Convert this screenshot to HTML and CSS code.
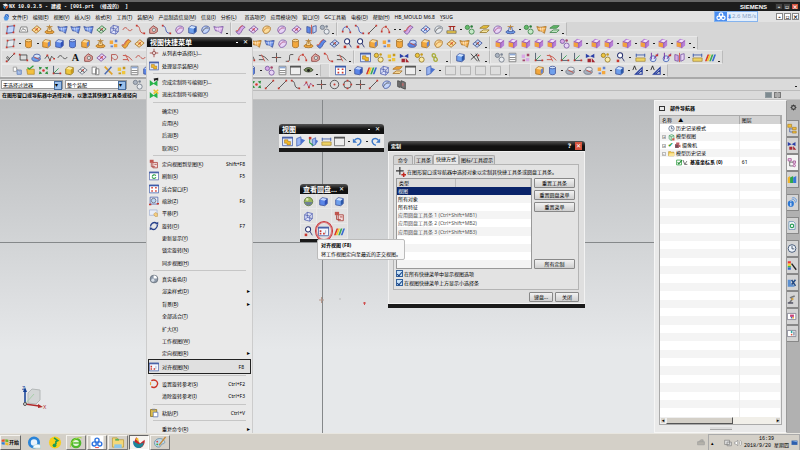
FILE: index.html
```
<!DOCTYPE html>
<html lang="zh-CN">

<head>
    <meta charset="utf-8">
    <title>NX 10.0.3.5 - 建模</title>
    <link rel="stylesheet" href="styles.css">
</head>

<body>
    <svg class="sprite" aria-hidden="true">
        <symbol id="cube" viewBox="0 0 13 13"><path class="a ln" d="M2 4.5l3-2.500 6 1v6l-3 2.500-6-1z"/><path class="b" d="M2.500 4.500l3-2 5 1-2.500 2z"/><path class="c" d="M8 5.500l2.700-2v5.300L8 11z"/></symbol>
        <symbol id="feat" viewBox="0 0 13 13"><path fill="#b77fd8" d="M2 4l4-3 6 2v6l-4 3-6-2z"/><path fill="#f3e4fa" d="M4 4l3-2 4 1-3 2z"/><path fill="#f2a23c" d="M2 5l5 1v5l-5-1z"/><path fill="none" stroke="#8a4f8e" stroke-width=".7" d="M2 4l6 2v6M8 6l4-3"/></symbol>
        <symbol id="sheet" viewBox="0 0 13 13"><path class="b ln" d="M3 3l8-1-1 8-8 1z"/><path fill="#d23a2e" d="M2 2h2v2H2zM10 1h2v2h-2zM1 10h2v2H1zM9 9h2v2H9z"/></symbol>
        <symbol id="mesh" viewBox="0 0 13 13"><path class="a ln" d="M1 3c4 2 7 0 11 0l-2 8c-3-2-4-3-7-3z"/><path fill="none" stroke="#fff" stroke-width=".6" d="M2 5.500c4 1 6 0 9 0M5 4l1 5M8 4v6"/></symbol>
        <symbol id="diamond" viewBox="0 0 13 13"><path class="b ln" d="M1 7l6-5 5 4-6 5z"/><path class="s" d="M4 5l5 4M4 9l5-5"/><circle fill="#d8443a" cx="7" cy="6" r="1"/></symbol>
        <symbol id="swoop" viewBox="0 0 13 13"><path class="a ln" d="M1 9c4 2 4-6 8-7l3 2c-4 1-4 8-8 8z"/><path fill="none" stroke="#d8443a" d="M1 8c4 1 3-5 8-6"/></symbol>
        <symbol id="cyl" viewBox="0 0 13 13"><path class="a ln" d="M3 3v7c1 2 6 2 7 0V3z"/><ellipse class="b ln" cx="6.500" cy="3" rx="3.500" ry="1.500"/></symbol>
        <symbol id="pad" viewBox="0 0 13 13"><ellipse class="a ln" cx="6.500" cy="9.500" rx="5.500" ry="2"/><path class="b ln" d="M4 9l1-5h3l1 5z"/><path fill="none" stroke="#b9853a" d="M3 3h7M6.500 1v6"/></symbol>
        <symbol id="blob" viewBox="0 0 13 13"><ellipse class="a ln" cx="6" cy="8" rx="5" ry="3"/><ellipse class="b ln" cx="7" cy="5" rx="4" ry="2.500"/><path fill="none" stroke="#cf4a3b" d="M4 6l6 3"/></symbol>
        <symbol id="leaf" viewBox="0 0 13 13"><path class="b ln" d="M2 8c0-6 6-7 9-4 1 4-3 8-7 7z"/><path class="s" d="M3 9c2-4 4-5 7-4"/></symbol>
        <symbol id="pair" viewBox="0 0 13 13"><path class="a ln" d="M1 3l4 1v7l-4-1z"/><path class="b ln" d="M8 3l4-1v7l-4 2z"/><path stroke="#cf4a3b" d="M6.500 1v11"/></symbol>
        <symbol id="curve" viewBox="0 0 13 13"><path class="s" d="M2 2c6 1 1 9 9 9"/><path fill="#c7372e" d="M1 1h2v2H1zM10 10h2v2h-2z"/></symbol>
        <symbol id="wave" viewBox="0 0 13 13"><path class="s" d="M1 7c2-4 4-3 5.500-1s4 3 5.500 0"/></symbol>
        <symbol id="line" viewBox="0 0 13 13"><path class="s" d="M2 11l9-9"/><path fill="#c7372e" d="M1 10h2v2H1zM10 1h2v2h-2z"/></symbol>
        <symbol id="arc" viewBox="0 0 13 13"><path class="s" d="M2 9c0-8 8-7 9 1"/><path fill="#c7372e" d="M1 8h2v2H1zM6 2h2v2H6zM10 9h2v2h-2z"/></symbol>
        <symbol id="zig" viewBox="0 0 13 13"><path class="s" d="M1 8l3-4 3 6 2-5 3 3"/><path fill="#c7372e" d="M3 3h2v2H3zM6 9h2v2H6zM11 7h2v2h-2z"/></symbol>
        <symbol id="trim" viewBox="0 0 13 13"><path class="s" d="M1 4c5 0 8 2 11 6M1 9h6"/><path fill="none" stroke="#cf4a3b" d="M4 3l4 8"/></symbol>
        <symbol id="cross" viewBox="0 0 13 13"><path class="s" d="M6.500 1v11M1 6.500h11"/><circle fill="#cf4a3b" cx="6.500" cy="6.500" r="1"/></symbol>
        <symbol id="stepc" viewBox="0 0 13 13"><path class="s" d="M2 11h3c3 0 0-8 3-8h3"/><path stroke="#cf4a3b" d="M4 11h2"/></symbol>
        <symbol id="circ" viewBox="0 0 13 13"><circle class="s" cx="6.500" cy="6.500" r="5"/><circle fill="#c7372e" cx="6.500" cy="6.500" r="1.200"/></symbol>
        <symbol id="circ4" viewBox="0 0 13 13"><circle class="s" cx="6.500" cy="6.500" r="4.500"/><path fill="#c7372e" d="M5.500 1h2v2h-2zM5.500 10h2v2h-2zM1 5.500h2v2H1zM10 5.500h2v2h-2z"/></symbol>
        <symbol id="pencil" viewBox="0 0 13 13"><path class="s" d="M1 11c4 0 5-3 3-5S1 8 4 9l7-7"/><path fill="#c7372e" d="M1 10h2v2H1zM10 1h2v2h-2z"/></symbol>
        <symbol id="rect" viewBox="0 0 13 13"><path class="s" d="M2.500 3.500h8v6h-8z"/><path fill="#c7372e" d="M1 2h2v2H1zM10 9h2v2h-2z"/></symbol>
        <symbol id="letter" viewBox="0 0 13 13"><text class="glyph" x="2" y="11">A</text></symbol>
        <symbol id="region" viewBox="0 0 13 13"><path fill="#e9a9a4" stroke="#883c38" d="M2 11V6l4-4 5 3v4l-3 2z"/><circle fill="#ddd" stroke="#777" cx="7" cy="7" r="2"/></symbol>
        <symbol id="loop" viewBox="0 0 13 13"><path fill="none" stroke="#b34c45" d="M3 11V3h5c4 2 2 7-2 6l-3-3"/></symbol>
        <symbol id="squares" viewBox="0 0 13 13"><path fill="#fff" stroke="#999" d="M1.500 2.500h4v5h-4z"/><path fill="#a8c0ea" stroke="#6584bd" d="M6 6h5v5H6z"/><path stroke="#999" d="M5 4l5 4"/></symbol>
        <symbol id="folder" viewBox="0 0 13 13"><path fill="#f2c03f" stroke="#a87a18" stroke-width=".7" d="M2 5l3-1 1 1h5v6H3z"/><path fill="none" stroke="#33a03b" stroke-width="1.500" d="M3 3l2 2 5-4"/></symbol>
        <symbol id="axes" viewBox="0 0 13 13"><path fill="none" stroke="#456" d="M3 1v9h9"/><path stroke="#2b9a4d" d="M3 10l6-6"/><path fill="#c7372e" d="M2 9h2v2H2zM10 9h2v2h-2z"/></symbol>
        <symbol id="pages" viewBox="0 0 13 13"><path fill="#fff" stroke="#777" d="M2.500 2.500h5v8h-5zM6.500 4.500h4v7h-4z"/></symbol>
        <symbol id="image" viewBox="0 0 13 13"><path fill="#f4f4f4" stroke="#777" d="M1.500 9.500l2-6h7l1 6z"/><path fill="none" stroke="#888" d="M4 8l2-3 1 2 1-1 1 2"/></symbol>
        <symbol id="cross2" viewBox="0 0 13 13"><path stroke="#e0a12b" stroke-width="2" d="M2 2l9 9"/><path stroke="#4a69b0" stroke-width="1.600" d="M10 2l-8 9"/></symbol>
        <symbol id="hash" viewBox="0 0 13 13"><path fill="none" stroke="#333" d="M1 2l8 9M1 9l8-7M7 2l4 9"/><path fill="#c7372e" d="M9 3h2v2H9z"/></symbol>
        <symbol id="chips" viewBox="0 0 13 13"><path class="a" d="M2 3h4v4H2zM7 7h4v4H7z"/><path class="c" d="M8 2h3v3H8zM3 9h3v2H3z"/></symbol>
        <symbol id="layout" viewBox="0 0 13 13"><path fill="#fff" stroke="#777" d="M2.500 1.500h8v10h-8z"/><path fill="#8ea9d6" d="M3 2h7v2H3z"/><path stroke="#777" d="M3 6.500h7M3 9h7"/></symbol>
        <symbol id="frame" viewBox="0 0 13 13"><path fill="#eee" stroke="#666" d="M.5 1.500h12v10H.5z"/><path fill="#555" d="M0 1h13v2H0z"/></symbol>
        <symbol id="empty" viewBox="0 0 13 13"><path fill="none" stroke="#aaa" d="M.5 1.500h12v10H.5z"/></symbol>
        <symbol id="fit" viewBox="0 0 13 13"><path fill="#fff" stroke="#3d5ba9" d="M.5 1.500h12v10H.5z"/><path fill="#3d5ba9" d="M0 1h13v2H0z"/><path fill="#d23a2e" d="M3 4h2v2H3zM8 4h2v2H8zM3 8h2v2H3zM8 8h2v2H8z"/></symbol>
        <symbol id="win" viewBox="0 0 13 13"><path fill="#dfe8fa" stroke="#4a62a8" d="M.5 1.500h12v10H.5z"/><path fill="#4a62a8" d="M0 1h13v2H0z"/><path fill="#f0b72d" stroke="#9a6a12" stroke-width=".6" d="M3 4.500h4v2h3v4H6v-2H3z"/></symbol>
        <symbol id="align" viewBox="0 0 13 13"><path fill="#f6f8ff" stroke="#4a62a8" d="M.5 1.500h12v10H.5z"/><path fill="#4a62a8" d="M0 1h13v2H0z"/><path fill="#c7372e" d="M2 5h2v2H2zM2 8h2v2H2zM6 8h2v2H6z"/><path stroke="#9ab" d="M9 5v4"/></symbol>
        <symbol id="refresh" viewBox="0 0 13 13"><path fill="#fff" stroke="#4a62a8" d="M.5 1.500h12v10H.5z"/><path fill="#4a62a8" d="M0 1h13v2H0z"/><path fill="none" stroke="#2ca045" stroke-width="1.500" d="M9 6c-2-2-4-1-5 1M4 8c1 2 4 2 5 0"/></symbol>
        <symbol id="zoom" viewBox="0 0 13 13"><path fill="#e8ecf6" stroke="#4a62a8" d="M1.500 1.500h10v9h-10z"/><circle fill="#bcd8f4" stroke="#667" cx="6" cy="6" r="3"/><path fill="#c7372e" d="M0 10h3v2H0zM10 9h3v2h-3z"/></symbol>
        <symbol id="pan" viewBox="0 0 13 13"><path fill="#e9edf8" stroke="#a5b2d1" d="M.5 2.500h10v7H.5z"/><path fill="#f6cf83" stroke="#b38a3f" stroke-width=".6" d="M6 8l2-2 3 1v4H8z"/></symbol>
        <symbol id="rotate" viewBox="0 0 13 13"><path fill="none" stroke="#27408b" stroke-width="1.700" d="M10 3C6 0 2 4 2 7M3 10c4 3 8-1 8-5"/><path fill="#27408b" d="M8 4l4-3v4zM5 9l-4 3V8z"/></symbol>
        <symbol id="shade" viewBox="0 0 13 13"><circle fill="#8f9bab" stroke="#5e6875" cx="6.500" cy="6.500" r="5"/><path fill="#fff" d="M6 6V2c3 0 5 2 4 4z"/><circle fill="#d6dde6" cx="5" cy="8" r="2"/></symbol>
        <symbol id="orbit" viewBox="0 0 13 13"><path fill="none" stroke="#cc3528" stroke-width="1.800" d="M3 2c5-2 9 1 8 5s-5 5-8 3"/><path fill="none" stroke="#eda33d" stroke-width="1.500" d="M2 4v4"/></symbol>
        <symbol id="paste" viewBox="0 0 13 13"><path fill="#e0c04e" stroke="#8a6d17" d="M2 2h8v9H2z"/><path fill="#888" d="M4 1h4v2H4z"/><path fill="#fff" stroke="#5871b4" d="M5.500 5.500h6v6h-6z"/></symbol>
        <symbol id="pick" viewBox="0 0 13 13"><path stroke="#b05a55" stroke-width="1.300" d="M6.500 1v11M1 6.500h11"/><circle fill="#e9cfcf" stroke="#8c4a47" cx="6.500" cy="6.500" r="2.200"/></symbol>
        <symbol id="flagk" viewBox="0 0 13 13"><path fill="#27b34a" d="M1 4l5 4 5-4v8L6 9l-5 3z"/><path fill="#222" d="M6 2l6-1v4l-3-1-2 2z"/></symbol>
        <symbol id="flagx" viewBox="0 0 13 13"><path fill="#27b34a" d="M1 4l5 4 5-4v8L6 9l-5 3z"/><path stroke="#eac52e" stroke-width="2" d="M6 1l6 5M12 1L6 6"/></symbol>
        <symbol id="orient" viewBox="0 0 13 13"><path fill="#f4dcdc" stroke="#a8403a" d="M5 4.500h6v7H5z"/><path fill="#c0564f" d="M1 1h5v4H1z"/><path fill="none" stroke="#a8403a" d="M3 5v5h5M7 7h3"/></symbol>
        <symbol id="gears" viewBox="0 0 13 13"><circle class="a ln" cx="4" cy="4" r="2.500"/><circle class="b ln" cx="9" cy="9" r="3"/><circle class="c" cx="9" cy="3" r="1.500"/></symbol>
        <symbol id="link" viewBox="0 0 13 13"><path fill="none" stroke="#a9ad3c" stroke-width="1.600" d="M5 2c3 0 4 4 1 4s-3-4 0-4zM7 6c3 0 4 5 1 5S5 6 8 6z"/></symbol>
        <symbol id="mate" viewBox="0 0 13 13"><path fill="#2b3fa8" d="M1 2l5 3 5-3v5L6 5 1 7z"/><path fill="#a52732" d="M3 8h4v4H3zM8 7l4 5H8z"/></symbol>
        <symbol id="stack" viewBox="0 0 13 13"><path class="a ln" d="M1 5l4-3h7l-3 3z"/><path class="b ln" d="M1 10l4-3h7l-3 3z"/></symbol>
        <symbol id="scope" viewBox="0 0 13 13"><path fill="none" stroke="#a32820" stroke-width="1.300" d="M3 3h8M5 3v4M9 3v5"/><path fill="#e7c54a" stroke="#444" stroke-width=".6" d="M1 8h11v3H1z"/></symbol>
        <symbol id="ruler" viewBox="0 0 13 13"><path fill="#edd264" stroke="#967622" stroke-width=".7" d="M1 7h11v4H1z"/><path stroke="#3857a8" d="M1 3.500h11M1.500 2v4M11.500 2v4"/></symbol>
        <symbol id="caliper" viewBox="0 0 13 13"><circle fill="#d9e6fb" stroke="#4866b3" cx="6" cy="8" r="3.500"/><path fill="none" stroke="#7c3ea8" stroke-width="1.200" d="M4 1v8M7 8l5-6"/><path fill="#c7372e" d="M9 3h3v2H9z"/></symbol>
        <symbol id="stripes" viewBox="0 0 13 13"><path fill="#d9372c" d="M0 11l3-8h2l-3 8z"/><path fill="#f1c92f" d="M2 11l3-8h2l-3 8z"/><path fill="#38a855" d="M5 11l3-8h2l-3 8z"/><path fill="#3768d0" d="M8 11l3-8h2l-3 8z"/></symbol>
        <symbol id="undo" viewBox="0 0 13 13"><path fill="none" stroke="#3d79c9" stroke-width="1.700" d="M3 5c4-4 9-1 7 3-1 2-2 3-4 3"/><path fill="#3d79c9" d="M1 3v5h5z"/></symbol>
        <symbol id="redo" viewBox="0 0 13 13"><path fill="none" stroke="#3d79c9" stroke-width="1.700" d="M10 5C6 1 1 4 3 8c1 2 2 3 4 3"/><path fill="#3d79c9" d="M12 3v5H7z"/></symbol>
        <symbol id="wire" viewBox="0 0 13 13"><path fill="#dfe3fa" stroke="#3f4fa8" stroke-width=".8" d="M2 4.500l3-3 6 1.500v6l-3 3-6-1.500zM2 4.500L8 6v6M8 6l3-3M5 1.500v6l6 1.500M5 7.500l-3 3"/></symbol>
        <symbol id="ball" viewBox="0 0 13 13"><circle fill="#98b55d" stroke="#5f7a3a" cx="6.500" cy="6.500" r="5"/><path fill="#6f7f95" d="M2 7h9c0 5-8 6-9 0z"/><circle fill="#dfeab5" cx="5" cy="4" r="1.500"/></symbol>
        <symbol id="seek" viewBox="0 0 13 13"><circle fill="#fff" stroke="#26306e" stroke-width="1.200" cx="6" cy="4" r="3"/><path fill="#c7372e" d="M2 9h3v3H2z"/><path stroke="#26306e" d="M8 6l3 5"/></symbol>
        <symbol id="sect" viewBox="0 0 13 13"><path fill="#9ab6f2" stroke="#3c59ab" stroke-width=".8" d="M2 3l5-2v9l-5 2z"/><path fill="#4b72d0" d="M7 3l5 2-5 5z"/></symbol>
        <symbol id="sectr" viewBox="0 0 13 13"><path fill="#9ab6f2" stroke="#3c59ab" stroke-width=".8" d="M5 4l4-2v8l-4 2z"/><path fill="none" stroke="#2b9a4d" stroke-width="1.300" d="M2 2v6l4 3"/><path fill="#c7372e" d="M1 1h3v3H1z"/><path fill="#4b72d0" d="M9 4l3 2-3 4z"/></symbol>
        <symbol id="eye" viewBox="0 0 13 13"><path fill="#74875a" stroke="#3f4a30" d="M1 6c3-4 8-4 11 0-3 3-8 3-11 0z"/><circle fill="#222" cx="6.500" cy="6.500" r="1.700"/></symbol>
        <symbol id="green4" viewBox="0 0 13 13"><path fill="#2c8f3c" d="M1 2l4 1-3 3zM12 2L8 3l3 3zM1 11l4-1-3-3zM12 11l-4-1 3-3z"/><circle fill="#d33" cx="6.500" cy="6.500" r="1.500"/></symbol>
        <symbol id="wall" viewBox="0 0 13 13"><path fill="#777" stroke="#444" d="M2 2l3 1v7l-3-1zM6 2l5 2v8l-5-2z"/><path fill="#b96b6b" d="M7 5h2v3H7z"/></symbol>
        <symbol id="note" viewBox="0 0 13 13"><path fill="none" stroke="#223a9c" stroke-width="1.300" d="M4 11h8V3zM6 11l6-5"/><path fill="none" stroke="#222" d="M1 6l2-5 2 5"/></symbol>
        <symbol id="clock" viewBox="0 0 13 13"><circle fill="#eef4fb" stroke="#50627e" stroke-width="1.300" cx="6.500" cy="6.500" r="5"/><path fill="none" stroke="#26344c" d="M6.500 3v4h3"/></symbol>
        <symbol id="tree" viewBox="0 0 13 13"><path fill="#f2d9f0" stroke="#a0468f" d="M1.500 1.500h4v3h-4zM8 4.500h3v3H8z"/><path fill="none" stroke="#555" d="M3.500 5v6H8M3.500 6H8"/><circle fill="#f2d9f0" stroke="#a0468f" cx="9.500" cy="10.500" r="1.500"/></symbol>
        <symbol id="asm" viewBox="0 0 13 13"><path fill="#f1bd36" stroke="#9c7014" stroke-width=".7" d="M1 1h5v4H1zM7 5h5v3H7zM7 10h5v2.500H7z"/><path fill="none" stroke="#4b61a0" d="M3.500 6v5H7M4 7h3"/></symbol>
        <symbol id="books" viewBox="0 0 13 13"><path fill="#efb52e" d="M1 4l3-2v9H1z"/><path fill="#2fa64c" d="M4 4l4-2v9H4z"/><path fill="#3577d8" d="M8 4l4-2v9H8z"/></symbol>
        <symbol id="info" viewBox="0 0 13 13"><circle fill="#2c77d4" cx="5" cy="8" r="4"/><path fill="none" stroke="#4a8de0" d="M6 2c3 0 5 2 5 5M7 0c4 0 6 3 6 6"/><path stroke="#fff" stroke-width="1.300" d="M5 5v1M5 7v4"/></symbol>
        <symbol id="web" viewBox="0 0 13 13"><path fill="#fff" stroke="#5f8ab0" d="M2.500 1.500h6l2 2v8h-8z"/><circle fill="none" stroke="#2a9c58" stroke-width="1.500" cx="6.500" cy="7" r="2.200"/></symbol>
        <symbol id="rainbow" viewBox="0 0 13 13"><path fill="#e33" d="M1 1h4v3H1z"/><path fill="#fc3" d="M1 4h4v3H1z"/><path fill="#3b5" d="M1 7h4v2H1z"/><path fill="#36c" d="M1 9h4v3H1z"/><path stroke="#222" stroke-width="1.800" d="M6 4l6 8"/></symbol>
        <symbol id="mill" viewBox="0 0 13 13"><path fill="#5b8fd0" d="M1 3h4v6h3l2 3H1z"/><path stroke="#234a85" stroke-width="2" d="M6 3l5 8M11 3l-5 6"/></symbol>
        <symbol id="robot" viewBox="0 0 13 13"><path fill="none" stroke="#777" stroke-width="2" d="M3 11l4-5-2-2 5-2"/><path fill="#556" d="M1 10h7v2H1z"/><circle fill="#d9a53c" cx="7" cy="6" r="1.500"/></symbol>
        <symbol id="scene" viewBox="0 0 13 13"><path fill="#fff" stroke="#778" d="M.5 2.500h11v8H.5z"/><path fill="#c9447a" d="M4 4h5v3H4z"/><path fill="#4469b8" d="M5 7h2v2H5z"/><path fill="#f0a830" d="M7 7h2v2H7z"/></symbol>
        <symbol id="board" viewBox="0 0 13 13"><path fill="#fff" stroke="#778" d="M.5 2.500h11v8H.5z"/><path fill="#2ba7a0" d="M5 3h2v3H5z"/><path fill="#e3553d" d="M5 7h2v2H5z"/><path fill="#89a" d="M8 4h2v5H8z"/></symbol>
        <symbol id="views" viewBox="0 0 13 13"><path fill="#d9f0dd" stroke="#2a8a4a" d="M2 3l5-2 4 2v6l-5 3-4-3z"/><path fill="none" stroke="#2a8a4a" d="M2 3l4 2 5-2M6 5v7"/><path fill="#d9534a" d="M8 8h4v4H8z"/></symbol>
        <symbol id="camera" viewBox="0 0 13 13"><path fill="#7e4b56" d="M2 4h7v7H2z"/><path fill="#c25c63" d="M4 1h6v4H4zM9 6l3-1v5l-3-1z"/></symbol>
        <symbol id="dir" viewBox="0 0 13 13"><path fill="#f4c747" stroke="#a27e1d" stroke-width=".8" d="M1 3h4l1 1h5v7H1z"/><path fill="#fbe596" d="M3 6h10l-2 5H1z"/></symbol>
        <symbol id="csys" viewBox="0 0 22 13"><path fill="#fff" stroke="#33a044" stroke-width="1.500" d="M1 2h9v9H1z"/><path fill="none" stroke="#238934" stroke-width="2" d="M3 6l2 3 6-7"/><path fill="none" stroke="#555" stroke-width="1.500" d="M13 2l3 8h5M16 10l4-6"/></symbol>
        <symbol id="cog" viewBox="0 0 13 13"><circle fill="none" stroke="#333" stroke-width="2" cx="6.500" cy="6.500" r="3.500"/><path stroke="#333" stroke-width="1.500" d="M6.500 1v2M6.500 10v2M1 6.500h2M10 6.500h2M3 3l1 1M10 10L9 9M10 3L9 4M3 10l1-1"/></symbol>
    </svg>

    <div class="app">
        <header class="title-bar">
            <svg class="app-icon" viewBox="0 0 13 13"><path fill="#e8e8e8" d="M1 3l6-2 5 3-6 3z"/><path fill="#2a8fd6" d="M2 5l4 2v5L3 9z"/><path fill="#e05a2b" d="M7 7l5-3-1 5-4 3z"/></svg>
            <span class="title">NX 10.0.3.5 - 建模 - [001.prt （修改的） ]</span>
            <span class="brand">SIEMENS</span>
            <button class="win-btn" aria-label="最小化">-</button>
            <button class="win-btn" aria-label="还原">▫</button>
            <button class="win-btn close" aria-label="关闭">×</button>
        </header>

        <nav class="menu-bar">
            <svg class="menu-logo" viewBox="0 0 13 13"><circle fill="#2c67c4" cx="7" cy="5" r="4"/><path fill="#4d94e4" d="M1 7l5-2 5 4-3 4H3z"/><path stroke="#fff" d="M5 3l4 3"/></svg>
            <a href="#">文件(<u>F</u>)</a>
            <a href="#">编辑(<u>E</u>)</a>
            <a href="#">视图(<u>V</u>)</a>
            <a href="#">插入(<u>S</u>)</a>
            <a href="#">格式(<u>R</u>)</a>
            <a href="#">工具(<u>T</u>)</a>
            <a href="#">装配(<u>A</u>)</a>
            <a href="#">产品制造信息(<u>M</u>)</a>
            <a href="#">信息(<u>I</u>)</a>
            <a href="#">分析(<u>L</u>)</a>
            <a class="after" href="#">首选项(<u>P</u>)</a>
            <a href="#">应用模块(<u>N</u>)</a>
            <a href="#">窗口(<u>O</u>)</a>
            <a href="#">GC工具箱</a>
            <a href="#">电极(<u>D</u>)</a>
            <a href="#">帮助(<u>H</u>)</a>
            <a href="#">HB_MOULD M6.8</a>
            <a href="#"><u>Y</u>SUG</a>
            <div class="speed">
                <svg class="speed-logo" viewBox="0 0 13 10"><g fill="none" stroke="#fff" stroke-width="1.400"><circle cx="6.500" cy="3" r="2"/><circle cx="4" cy="6.500" r="2"/><circle cx="9" cy="6.500" r="2"/></g></svg>
                <span class="speed-text"><b>⬇</b>2.6 MB/s</span>
            </div>
            <div class="doc-btns">
                <button aria-label="最小化">-</button>
                <button aria-label="还原">▫</button>
                <button aria-label="关闭">×</button>
            </div>
        </nav>

        <div class="tool-row">
            <div class="tools" data-tools="sheet image diamond:orange pad:orange mesh mesh mesh diamond:green wire wave:red curve:red region:grey curve:blue leaf:pink cube:blue leaf mesh:pink ,"></div>
            <div class="tools" data-tools="swoop:pink diamond:pink leaf:orange _ leaf:pink _ diamond:pink _ pair gears:grey ,"></div>
            <div class="tools" data-tools="arc:blue curve:blue line arc:red . . swoop:pink _ _ diamond:blue leaf:grey scope . gears:green _ stack:yellow leaf:pink pad:blue . gears:green mesh:orange stack:green ,"></div>
        </div>
        <div class="tool-row">
            <div class="tools" data-tools="sheet:grey . cyl:orange . cube:orange cube cyl cube:orange _ pad:orange chips:orange swoop:orange diamond:orange cube:blue cyl:orange cube:orange blob mesh pad:blue cube leaf mesh:orange mesh leaf:pink cyl:orange pad:orange swoop diamond seek seek cube:orange chips:orange cyl:orange blob cube:orange leaf:orange diamond:orange mesh:orange diamond ,"></div>
            <div class="tools" data-tools="feat feat feat feat feat gears:pink feat . feat feat . feat . feat . feat . feat . ,"></div>
        </div>
        <div class="tool-row">
            <div class="tools" data-tools="pencil rect blob:blue zig wave letter region diamond:pink loop trim:red wave:red _ curve arc line _ rect trim curve circ _ arc trim cross stepc arc:red region:blue curve:red trim ,"></div>
            <div class="tools" data-tools="_ win gears:yellow chips:yellow mate _ gears:yellow _ link _ _ ,"></div>
            <div class="tools" data-tools="cube:blue _ hash _ ,"></div>
            <div class="tools" data-tools="gears:grey layout chips:pink axes trim:red axes axes mate _ gears:yellow _ seek . _ ruler caliper caliper pair:pink . ruler stripes ,"></div>
        </div>
        <div class="tool-row last">
            <div class="tools indent" data-tools="squares folder green4 axes cube:yellow diamond:grey pages cross2 chips:yellow layout cube chips:yellow cube:blue layout pages squares cube:grey gears cyl . gears:pink layout frame eye ,"></div>
            <div class="tools lead" data-tools="fit . cube stripes wire stack:orange frame . _ sect . _ empty _ empty _ empty _ empty _ ,"></div>
            <div class="tools far" data-tools="cube:orange cyl:blue . blob:grey . blob:grey chips:orange . cube:blue . note . note ,"></div>
        </div>

        <div class="filter-row">
            <label class="combo"><select aria-label="过滤器"><option>无选择过滤器</option></select></label>
            <label class="combo"><select aria-label="范围"><option>整个装配</option></select></label>
            <div class="tools flat" data-tools="gears:grey cube pick chips circ cross cube:blue rect curve _ green4 line line curve zig:pink cross circ circ4 cross line leaf _ wall"></div>
            <i class="more"></i>
        </div>

        <div class="cue-row">
            <p>在图形窗口或导航器中选择对象，以激活其快捷工具条或径向</p>
            <span class="cue-box"></span><span class="cue-box cross-box"></span>
        </div>

        <main class="work">
            <section class="canvas">
                <svg class="triad" viewBox="0 0 26 26"><path fill="#d3d6d6" stroke="#b4b8b8" d="M6 8l4-4 8 1v10l-4 4-8-1z"/><path fill="none" stroke="#a7cfa9" d="M3 19l9-10"/><path stroke="#123f96" stroke-width="1.500" d="M3 19V5"/><path fill="#123f96" d="M1 7l2-5 2 5z"/><path stroke="#b02a2a" stroke-width="1.500" d="M3 19l14 2"/><path fill="#b02a2a" d="M16 19l5 3-5 1z"/><circle fill="#ddd" stroke="#555" cx="3" cy="19" r="1.500"/><text class="lz" x="0" y="5">Z</text><text class="lx" x="21" y="24">X</text></svg>
                <svg class="marks" viewBox="0 0 50 10"><path stroke="#b89a8e" d="M2 5h5M4.500 2v6"/><path stroke="#bbb" d="M22 4h2"/><path stroke="#d05050" d="M46 8h3M47.500 7v3"/></svg>
            </section>

            <aside class="navigator">
                <h2><i></i>部件导航器</h2>
                <div class="nav-frame">
                    <table class="nav-table">
                        <thead><tr><th>名称 <span class="sort">▲</span></th><th>图层</th></tr></thead>
                        <tbody id="nav-rows">
                            <tr><td class="lvl1"><svg><use href="#clock"/></svg>历史记录模式</td><td></td></tr>
                            <tr><td><i>+</i><svg><use href="#views"/></svg>模型视图</td><td></td></tr>
                            <tr><td><i>+</i><b class="tick">✔</b><svg><use href="#camera"/></svg>摄像机</td><td></td></tr>
                            <tr><td><i>-</i><svg><use href="#dir"/></svg>模型历史记录</td><td></td></tr>
                            <tr><td class="lvl2"><svg><use href="#csys"/></svg><b>基准坐标系 (0)</b></td><td>61</td></tr>
                        </tbody>
                    </table>
                    <div class="scroll"><button aria-label="左">◂</button><span class="thumb"></span><button aria-label="右">▸</button></div>
                </div>
                <div class="grip"></div>
            </aside>

            <nav class="resource-bar">
                <svg class="gear"><use href="#cog"/></svg>
                <button aria-label="装配导航器"><svg><use href="#asm"/></svg></button>
                <button aria-label="约束导航器"><svg><use href="#mate"/></svg></button>
                <button class="on" aria-label="部件导航器"><svg><use href="#tree"/></svg></button>
                <button aria-label="重用库"><svg><use href="#books"/></svg></button>
                <button class="apart" aria-label="HD3D"><svg><use href="#info"/></svg></button>
                <button class="apart" aria-label="浏览器"><svg><use href="#web"/></svg></button>
                <button class="apart" aria-label="历史记录"><svg><use href="#clock"/></svg></button>
                <button aria-label="系统材料"><svg><use href="#rainbow"/></svg></button>
                <button aria-label="加工向导"><svg><use href="#mill"/></svg></button>
                <button aria-label="角色"><svg><use href="#robot"/></svg></button>
                <button aria-label="系统场景"><svg><use href="#scene"/></svg></button>
                <button aria-label="布局"><svg><use href="#board"/></svg></button>
            </nav>
        </main>

        <section class="float view-bar">
            <h3>视图<i class="drop"></i><button aria-label="关闭">✕</button></h3>
            <div class="tools flat" data-tools="win sect sectr ruler frame . undo . redo"></div>
        </section>

        <section class="float disc-bar">
            <h3>查看圆盘...<button aria-label="关闭">✕</button></h3>
            <div class="disc-grid">
                <button aria-label="真实着色"><svg><use href="#ball"/></svg></button>
                <button aria-label="带边着色"><svg><use href="#cube"/></svg></button>
                <button class="blue" aria-label="着色"><svg><use href="#cube"/></svg></button>
                <button aria-label="线框"><svg><use href="#wire"/></svg></button>
                <button aria-label="空"></button>
                <button aria-label="定向"><svg><use href="#orient"/></svg></button>
                <button aria-label="查找"><svg><use href="#seek"/></svg></button>
                <button class="ringed" aria-label="对齐视图"><svg><use href="#align"/></svg></button>
                <button aria-label="面分析"><svg><use href="#stripes"/></svg></button>
            </div>
        </section>

        <section class="float dialog">
            <h3>定制<button aria-label="帮助">?</button><button class="close" aria-label="关闭">✕</button></h3>
            <div class="dialog-body">
                <div class="tabs">
                    <button>命令</button><button>工具条</button><button class="on">快捷方式</button><button>图标/工具提示</button>
                </div>
                <div class="tab-page">
                    <p class="hint"><svg viewBox="0 0 13 13"><path stroke="#333" stroke-width="1.500" d="M5 0v10M0 5h10"/><path stroke="#c2281e" stroke-width="2" d="M10 7v6M7 10h6"/></svg>在图形窗口或导航器中选择对象以定制其快捷工具条或圆盘工具条。</p>
                    <div class="pick-area">
                        <table class="types">
                            <thead><tr><th>类型</th><th></th></tr></thead>
                            <tbody>
                                <tr class="on"><td colspan="2">视图</td></tr>
                                <tr><td colspan="2">所有对象</td></tr>
                                <tr><td colspan="2">所有特征</td></tr>
                                <tr class="dim"><td colspan="2">应用圆盘工具条 1 (Ctrl+Shift+MB1)</td></tr>
                                <tr class="dim"><td colspan="2">应用圆盘工具条 2 (Ctrl+Shift+MB2)</td></tr>
                                <tr class="dim"><td colspan="2">应用圆盘工具条 3 (Ctrl+Shift+MB3)</td></tr>
                                <tr><td colspan="2"></td></tr>
                                <tr><td colspan="2"></td></tr>
                                <tr><td colspan="2"></td></tr>
                                <tr><td colspan="2"></td></tr>
                            </tbody>
                        </table>
                        <div class="side-btns">
                            <button class="btn">重置工具条</button>
                            <button class="btn">重置圆盘菜单</button>
                            <button class="btn">重置菜单</button>
                            <button class="btn last">所有定制</button>
                        </div>
                    </div>
                    <label class="check"><input type="checkbox" checked>在所有快捷菜单中显示视图选项</label>
                    <label class="check"><input type="checkbox" checked>在视图快捷菜单上方显示小选择条</label>
                </div>
                <div class="foot"><button class="btn">键盘...</button><button class="btn">关闭</button></div>
            </div>
        </section>

        <div class="tooltip"><b>对齐视图 (F8)</b><span>将工作视图定向至最近的正交视图。</span></div>

        <section class="popup">
            <h3>视图快捷菜单<i class="drop"></i><button aria-label="关闭">✕</button></h3>
            <div class="popup-list">
                <button><svg><use href="#pick"/></svg><span>从列表中选择(<u>L</u>)...</span></button>
                <button><svg><use href="#win"/></svg><span>处理显示装配(<u>A</u>)</span></button>
                <hr>
                <button><svg><use href="#flagk"/></svg><span>完成定制符号编辑(<u>F</u>)...</span></button>
                <button><svg><use href="#flagx"/></svg><span>退出定制符号编辑(<u>X</u>)</span></button>
                <hr>
                <button><svg></svg><span>确定(<u>K</u>)</span></button>
                <button><svg></svg><span>应用(<u>A</u>)</span></button>
                <button><svg></svg><span>后退(<u>B</u>)</span></button>
                <button><svg></svg><span>取消(<u>C</u>)</span></button>
                <hr>
                <button><svg><use href="#orient"/></svg><span>定向视图到草图(<u>K</u>)</span><kbd>Shift+F8</kbd></button>
                <button><svg><use href="#refresh"/></svg><span>刷新(<u>S</u>)</span><kbd>F5</kbd></button>
                <button><svg><use href="#fit"/></svg><span>适合窗口(<u>F</u>)</span></button>
                <button><svg><use href="#zoom"/></svg><span>缩放(<u>Z</u>)</span><kbd>F6</kbd></button>
                <button><svg><use href="#pan"/></svg><span>平移(<u>P</u>)</span></button>
                <button><svg><use href="#rotate"/></svg><span>旋转(<u>O</u>)</span><kbd>F7</kbd></button>
                <button><svg></svg><span>更新显示(<u>Y</u>)</span></button>
                <button><svg></svg><span>锁定旋转(<u>N</u>)</span></button>
                <button><svg></svg><span>同步视图(<u>H</u>)</span></button>
                <hr>
                <button><svg><use href="#shade"/></svg><span>真实着色(<u>I</u>)</span></button>
                <button class="sub"><svg></svg><span>渲染样式(<u>D</u>)</span></button>
                <button class="sub"><svg></svg><span>背景(<u>B</u>)</span></button>
                <button><svg></svg><span>全部适合(<u>T</u>)</span></button>
                <button><svg></svg><span>扩大(<u>X</u>)</span></button>
                <button><svg></svg><span>工作视图(<u>W</u>)</span></button>
                <button class="sub"><svg></svg><span>定向视图(<u>R</u>)</span></button>
                <button class="on"><svg><use href="#align"/></svg><span>对齐视图(<u>N</u>)</span><kbd>F8</kbd></button>
                <hr>
                <button><svg><use href="#orbit"/></svg><span>设置旋转参考(<u>S</u>)</span><kbd>Ctrl+F2</kbd></button>
                <button><svg></svg><span>清除旋转参考(<u>I</u>)</span><kbd>Ctrl+F3</kbd></button>
                <hr>
                <button><svg><use href="#paste"/></svg><span>粘贴(<u>P</u>)</span><kbd>Ctrl+V</kbd></button>
                <hr>
                <button class="sub"><svg></svg><span>重复命令(<u>R</u>)</span></button>
            </div>
        </section>

        <footer class="taskbar">
            <button class="start"><svg viewBox="0 0 13 13"><path fill="#e2522b" d="M1 3l5-1v4H1z"/><path fill="#6fb52c" d="M7 2l5 1v4L7 6z"/><path fill="#2f7fd6" d="M1 7h5v4l-5-1z"/><path fill="#f2bd2b" d="M7 7l5 1v4l-5-1z"/></svg>开始</button>
            <button class="task" aria-label="浏览器"><svg viewBox="0 0 14 14"><circle fill="#e9f3fc" stroke="#2a84d8" stroke-width="3" cx="7" cy="7" r="5"/><path fill="#f4f9fd" stroke="#9cc" stroke-width=".5" d="M6 13c0-4 5-5 8-3v3z"/></svg></button>
            <button class="task" aria-label="音乐"><svg viewBox="0 0 14 14"><circle fill="#f8cf1c" cx="7" cy="7" r="6.500"/><path fill="none" stroke="#1f9e54" stroke-width="1.800" d="M6 2l4 3-2 1v3"/><circle fill="#1f9e54" cx="6.500" cy="10" r="2"/></svg></button>
            <button class="task open" aria-label="浏览器"><svg viewBox="0 0 14 14"><circle fill="#e6f7dd" stroke="#4fb92c" stroke-width="2.500" cx="7" cy="7.500" r="4.500"/><path stroke="#4fb92c" stroke-width="1.500" d="M4 7.500h7"/><path fill="none" stroke="#a8d93b" d="M1 12C0 7 8 0 13 2"/></svg></button>
            <button class="task open" aria-label="网盘"><svg viewBox="0 0 14 14"><path fill="#fff" d="M0 0h14v14H0z"/><g fill="none" stroke="#2f74e0" stroke-width="1.500"><circle cx="7" cy="4.500" r="2.200"/><circle cx="4" cy="8.500" r="2.200"/><circle cx="10" cy="8.500" r="2.200"/></g><path fill="#e33" d="M5 12h4v1H5z"/></svg></button>
            <button class="task open" aria-label="资源管理器"><svg viewBox="0 0 14 14"><path fill="#f4d878" stroke="#b8983c" stroke-width=".8" d="M1 2h5l1 2h6v8H1z"/><path fill="#8cc6ea" d="M3 9h8v4H3z"/><path fill="#5bb05a" d="M4 3h4v2H4z"/></svg></button>
            <button class="task open active" aria-label="NX"><svg viewBox="0 0 14 14"><path fill="#1d74c2" d="M1 5l6 4-1 4C2 12 0 9 1 5z"/><path fill="#c5272b" d="M4 1l4 7 5-4c1 4-2 9-6 9L2 6z"/><path fill="#f1c232" d="M3 3l3-1 1 5z"/><path fill="#1f8796" d="M1 6l6 3 5-2c0 4-3 6-6 6C3 12 1 10 1 6z"/></svg></button>
            <button class="task open" aria-label="画图"><svg viewBox="0 0 14 14"><path fill="#bdd9ea" stroke="#7597ab" d="M1 7c1-5 9-6 11-1 1 3-4 2-4 4 0 3-7 3-7-3z"/><circle fill="#d44" cx="4" cy="6" r="1"/><circle fill="#3a4" cx="4" cy="9" r="1"/><path stroke="#c88a3b" stroke-width="1.500" d="M13 1L6 10"/></svg></button>
            <svg class="kb" viewBox="0 0 13 13"><path fill="#b5b2aa" stroke="#999" d="M1 6h11v5H1zM3 6l3-3h4v3"/></svg>
            <div class="tray">
                <span>▴</span>
                <svg viewBox="0 0 13 13"><path fill="#ddd" stroke="#777" d="M1 2h8v7H1zM5 5h7v6H5z"/></svg>
                <svg viewBox="0 0 13 13"><path fill="#fff" stroke="#888" d="M1 5h2l3-3v9L3 8H1zM8 4c2 1 2 4 0 5M10 2c3 2 3 7 0 9"/></svg>
                <div class="time"><span>16:39</span><span>2018/9/20 星期四</span></div>
                <svg viewBox="0 0 13 13"><path fill="#2d5fae" d="M1 2h11v8H1z"/><path fill="#7ba8e0" d="M2 3h9v2z"/></svg>
            </div>
        </footer>
    </div>

    <script src="script.js"></script>
</body>

</html>
```
FILE: styles.css
```
* {
    margin: 0;
    padding: 0;
    box-sizing: border-box;
}

body {
    font: 5px/6px "Noto Sans", "Noto Sans CJK SC", sans-serif;
    color: #000;
    overflow: hidden;
}

button,
select {
    font: inherit;
    color: inherit;
    border: 0;
    background: none;
}

u {
    text-decoration-thickness: 1px;
    text-decoration-color: #aaa;
}

.sprite {
    display: none;
}

/* icon colours */
.a { fill: var(--a, #5b86e8); }
.b { fill: var(--b, #c3d5fb); }
.c { fill: var(--c, #2f4fb5); }
.ln { stroke: var(--l, #46599c); stroke-width: 1px; }
.s { fill: none; stroke: var(--s, #444); stroke-width: 1px; }
.glyph { font: bold 12px "Liberation Serif", serif; fill: #111; }

.blue { --a: #6fa0ec; --b: #d4e5fc; --c: #2c58a8; --s: #3850b5; }
.orange { --a: #f3a73c; --b: #fbdc9c; --c: #6584cf; --l: #a8752e; --s: #c87820; }
.pink { --a: #d9a9e6; --b: #e8d4f6; --c: #a4476b; --l: #7b5aa6; --s: #a3457c; }
.green { --a: #62ba68; --b: #c6e8c8; --c: #2a7d3a; --l: #3f8449; }
.grey { --a: #aab3c0; --b: #e8ebef; --c: #7b8594; --l: #737b88; }
.red { --a: #dc6a5f; --b: #f6c9c4; --s: #c04438; }
.yellow { --a: #efc63c; --b: #faeaa4; --c: #c79a1c; --l: #96792a; }

.app {
    position: relative;
    display: flex;
    flex-direction: column;
    height: 100vh;
    background: #d9d9d9;
}

.title-bar {
    display: flex;
    align-items: center;
    height: 11px;
    padding: 0 1px 0 2px;
    background: #1c1c1c;
    border-top: 2px solid #666;
    color: #fff;
}

.app-icon {
    width: 7px;
    height: 7px;
}

.title {
    flex: 1;
    font: bold 5px/8px "Liberation Mono", "Noto Sans CJK SC", monospace;
    white-space: pre;
}

.brand {
    font: bold 6px/8px "Liberation Sans", sans-serif;
    margin-right: 8px;
}

.win-btn {
    width: 8px;
    height: 7px;
    background: #444;
    border: 1px solid #222;
    font: bold 6px/5px "DejaVu Sans", sans-serif;
}

.close {
    background: #d5553f;
    color: #fff;
}

.menu-bar {
    display: flex;
    align-items: center;
    gap: 5px;
    height: 11px;
    padding: 0 1px 0 3px;
    background: #e2e2e2;
}

.menu-bar a {
    color: inherit;
    text-decoration: none;
    white-space: nowrap;
}

.menu-bar .after {
    margin-left: 3px;
}

.menu-logo {
    width: 7px;
    height: 8px;
    margin-right: -3px;
}

.speed {
    display: flex;
    width: 44px;
    height: 11px;
    margin-left: auto;
    border: 1px solid #86b4ee;
    background: #e3effd;
    color: #8aa4c6;
    font-size: 6px;
}

.speed-logo {
    width: 12px;
    background: #4a8df0;
}

.speed-text {
    line-height: 9px;
    white-space: nowrap;
}

.speed-text b {
    color: #4a8df0;
    font-size: 5px;
}

.doc-btns {
    display: flex;
    gap: 1px;
    margin-left: 13px;
}

.doc-btns button {
    width: 7px;
    height: 7px;
    border: 1px solid #888;
    background: #fff;
    font: bold 6px/5px "DejaVu Sans", sans-serif;
}

/* toolbars */
.tool-row {
    display: flex;
    height: 14px;
    padding: 0 1px;
    background: #d6d6d6;
}

.tool-row.last {
    border-bottom: 1px solid #a9a9a9;
}

.tools {
    display: flex;
    align-items: center;
    padding-left: 2px;
    border: 1px solid #e9e9e9;
    border-right-color: #bbb;
    background: #dedede;
}

.tools.indent {
    padding-left: 9px;
}

.tools.lead {
    margin-left: 8px;
    padding-left: 4px;
}

.tools.far {
    margin-left: 20px;
}

.tools.flat {
    border: 0;
    background: none;
}

.tool {
    width: 13px;
    height: 12px;
    flex: none;
}

.tool svg {
    display: block;
    width: 11px;
    height: 11px;
    margin: 0 auto;
}

.drop {
    flex: none;
    width: 5px;
    height: 3px;
    background: linear-gradient(#222, #222) center / 2px 1px no-repeat;
}

.gap {
    flex: none;
    width: 2px;
}

.over {
    flex: none;
    width: 5px;
    height: 9px;
    background: linear-gradient(#222, #222) 1px 8px / 2px 1px no-repeat;
}

.filter-row {
    display: flex;
    align-items: center;
    height: 13px;
    padding-left: 1px;
    background: #dadada;
    border-top: 1px solid #a9a9a9;
    border-bottom: 1px solid #bbb;
}

.combo {
    position: relative;
    width: 62px;
    margin-right: 2px;
}

.combo select {
    display: block;
    width: 100%;
    height: 9px;
    padding-left: 1px;
    border: 1px solid #999;
    background: #fff;
    appearance: none;
}

.combo::after {
    content: "▾";
    position: absolute;
    top: 1px;
    right: 1px;
    width: 6px;
    height: 7px;
    background: #9cc0ea;
    border: 1px solid #466c9e;
    font: 6px/5px "DejaVu Sans", sans-serif;
    pointer-events: none;
}

.more {
    margin: 4px 3px 0 auto;
    width: 2px;
    height: 1px;
    background: #222;
}

.cue-row {
    display: flex;
    align-items: center;
    height: 9px;
    padding: 0 19px 0 2px;
    background: #dadada;
    border-bottom: 1px solid #c2c2c2;
    font-weight: bold;
    gap: 2px;
}

.cue-row p {
    flex: 1;
}

.cue-box {
    width: 7px;
    height: 6px;
    background: #7d8a90;
    border: 1px solid #909a9f;
}

.cross-box {
    background: #aaa;
    border: 1px dashed #777;
}

/* work area */
.work {
    flex: 1;
    min-height: 0;
    display: flex;
}

.canvas {
    position: relative;
    flex: 1;
    background:
        linear-gradient(90deg, #85888a, #85888a) 322px 0 / 1px 100% no-repeat,
        linear-gradient(#85888a, #85888a) 0 142px / 100% 1px no-repeat,
        linear-gradient(#b8babc, #e6e8ea 75%);
}

.triad {
    position: absolute;
    left: 22px;
    bottom: 22px;
    width: 26px;
    height: 26px;
}

.triad text {
    font: 5px "Liberation Sans", sans-serif;
}

.lz { fill: #123f96; }
.lx { fill: #b02a2a; }

.marks {
    position: absolute;
    left: 317px;
    top: 195px;
    width: 50px;
    height: 10px;
}

.navigator {
    display: flex;
    flex-direction: column;
    width: 133px;
    padding: 0 4px 2px;
    background: #e9e9e9;
    border: 1px solid #f6f6f6;
    border-right-color: #999;
}

.navigator h2 {
    display: flex;
    align-items: center;
    gap: 5px;
    height: 14px;
    font-size: 5px;
}

.navigator h2 i {
    width: 6px;
    height: 5px;
    border: 1px solid #333;
}

.nav-frame {
    flex: 1;
    min-height: 0;
    display: flex;
    flex-direction: column;
    border: 1px solid #aaa;
    background: #fff;
}

.nav-table {
    flex: 1;
    width: 100%;
    border-spacing: 0;
    table-layout: fixed;
    line-height: 6px;
}

.nav-table th {
    width: 34%;
    height: 8px;
    padding-left: 2px;
    text-align: left;
    font-weight: normal;
    background: #d3d3d3;
    border-right: 1px solid #aaa;
}

.nav-table th:first-child {
    width: 66%;
}

.sort {
    margin-left: 5px;
}

.nav-table td {
    height: 8px;
    padding-left: 2px;
    border-right: 1px solid #eee;
    white-space: nowrap;
}

.nav-table tbody tr:nth-child(even) {
    background: #f4f4f4;
}

.nav-table td svg {
    width: 7px;
    height: 7px;
    margin: -1px 1px -1px 0;
    vertical-align: middle;
}

.nav-table i {
    display: inline-block;
    width: 4px;
    height: 4px;
    margin-right: 2px;
    border: 1px solid #bbb;
    font: 4px/2px "Liberation Sans", sans-serif;
}

.nav-table .lvl1 {
    padding-left: 8px;
}

.nav-table .lvl2 {
    padding-left: 16px;
}

.nav-table .lvl2 svg {
    width: 12px;
    margin-right: 2px;
}

.tick {
    margin-right: 1px;
    color: #2c9c3a;
    font-size: 6px;
    line-height: 1px;
}

.scroll {
    display: flex;
    height: 7px;
    background: #f1efe9;
}

.scroll button {
    width: 6px;
    background: #d8d4cc;
    border: 1px solid #eee;
    font: 5px/5px "DejaVu Sans", sans-serif;
}

.thumb {
    width: 55%;
    margin-right: auto;
    background: #d4d0c8;
    border: 1px solid #eee;
    border-right-color: #555;
    border-bottom-color: #555;
}

.grip {
    width: 22px;
    height: 3px;
    margin: 2px auto 0;
    background: #ddd;
    border-bottom: 1px solid #aaa;
}

.resource-bar {
    display: flex;
    flex-direction: column;
    width: 13px;
    padding-right: 1px;
    background: #b1b1b1;
}

.resource-bar .gear {
    width: 7px;
    height: 7px;
    margin: 4px 3px 9px;
}

.resource-bar button {
    height: 17px;
    border: 1px solid #888;
    border-left: 0;
    background: #d4d4d4;
}

.resource-bar .on {
    background: #f4f4f4;
}

.resource-bar .apart {
    margin-top: 6px;
}

.resource-bar svg {
    display: block;
    width: 10px;
    height: 11px;
}

/* floating windows */
.float,
.popup {
    position: absolute;
    background: #e9e9e9;
    border-radius: 3px 3px 0 0;
}

.float {
    border-bottom: 4px solid #1a1a1a;
}

.float h3,
.popup h3 {
    display: flex;
    align-items: center;
    height: 10px;
    padding: 0 3px;
    border-radius: 3px 3px 0 0;
    background: linear-gradient(#555, #111 50%);
    color: #fff;
    font-size: 7px;
    line-height: 9px;
    white-space: nowrap;
}

.float h3 button,
.popup h3 button {
    width: 7px;
    height: 8px;
    margin-left: auto;
    font: bold 6px/8px "DejaVu Sans", sans-serif;
}

h3 .drop {
    margin: 0 3px 0 auto;
    background-image: linear-gradient(#fff, #fff);
}

.float h3 .drop + button,
.popup h3 .drop + button {
    margin-left: 0;
}

.view-bar {
    left: 279px;
    top: 124px;
    width: 105px;
}

.view-bar .tools {
    height: 14px;
}

.disc-bar {
    left: 300px;
    top: 184px;
    width: 48px;
    border-bottom-width: 3px;
}

.disc-grid {
    display: grid;
    grid-template-columns: repeat(3, 1fr);
    grid-auto-rows: 14px;
    gap: 1px;
    padding: 0 1px 1px;
}

.disc-grid button {
    background: #e1e1e1;
}

.disc-grid svg {
    display: block;
    width: 11px;
    height: 11px;
    margin: 0 auto;
}

.ringed {
    position: relative;
}

.ringed::after {
    content: "";
    position: absolute;
    inset: -3px -2px;
    border: 1px solid #c9363a;
    outline: 0;
    box-shadow: inset 0 0 0 1px #d9767a;
    border-radius: 50%;
}

.dialog {
    left: 388px;
    top: 141px;
    width: 197px;
}

.dialog h3 {
    font-size: 5px;
}

.dialog h3 button + button {
    margin-left: 2px;
}

.dialog h3 .close {
    background: #d5553f;
}

.dialog-body {
    padding: 2px 5px 1px 4px;
    background: #dfdfdf;
    border: 1px solid #f2f2f2;
}

.tabs {
    display: flex;
    height: 10px;
    padding-top: 1px;
    gap: 1px;
}

.tabs button {
    height: 9px;
    padding: 0 4px;
    border: 1px solid #aaa;
    border-bottom: 0;
    border-radius: 2px 2px 0 0;
    background: #d4d4d4;
    line-height: 7px;
}

.tabs button + button {
    padding: 0 1px;
}

.tabs .on {
    height: 10px;
    margin: -1px -1px 0;
    padding: 0 2px;
    background: #e8e8e8;
}

.tab-page {
    padding: 1px 3px 2px 2px;
    border: 1px solid #b4b4b4;
    background: #e3e3e3;
}

.hint {
    display: flex;
    align-items: center;
    height: 12px;
    gap: 1px;
    white-space: nowrap;
}

.hint svg {
    width: 10px;
    height: 10px;
}

.pick-area {
    display: flex;
    gap: 2px;
    height: 91px;
}

.types {
    flex: 1;
    border: 1px solid #999;
    border-spacing: 0;
    background: #fff;
    line-height: 6px;
}

.types th {
    width: 56%;
    height: 8px;
    padding-left: 2px;
    text-align: left;
    font-weight: normal;
    background: #dcdcdc;
    border-right: 1px solid #bbb;
}

.types th:first-child {
    width: 44%;
}

.types td {
    height: 8px;
    padding-left: 1px;
}

.types tr:nth-child(even) {
    background: #f4f4f4;
}

.types .on {
    background: #0a246a;
    color: #fff;
}

.types .dim {
    color: #555;
}

.side-btns {
    display: flex;
    flex-direction: column;
    gap: 2px;
    width: 41px;
}

.btn {
    height: 10px;
    border: 1px solid #888;
    border-radius: 1px;
    background: linear-gradient(#f2f2f2, #cfcfcf);
    line-height: 8px;
    white-space: nowrap;
}

.side-btns .last {
    margin-top: auto;
}

.check {
    display: flex;
    align-items: center;
    gap: 1px;
    height: 9px;
}

.check input {
    position: relative;
    width: 7px;
    height: 7px;
    appearance: none;
    border: 1px solid #33609a;
    background: #c8e2f8;
}

.check input:checked::after {
    content: "";
    position: absolute;
    left: 1px;
    top: 0;
    width: 2px;
    height: 4px;
    border: solid #123c80;
    border-width: 0 1px 1px 0;
    transform: rotate(40deg);
}

.foot {
    display: flex;
    justify-content: flex-end;
    gap: 2px;
    padding-top: 2px;
}

.foot .btn {
    width: 24px;
}

.tooltip {
    position: absolute;
    left: 317px;
    top: 239px;
    display: flex;
    flex-direction: column;
    gap: 3px;
    padding: 2px 3px;
    border: 1px solid #bbb;
    border-radius: 2px;
    background: #f7f7f7;
    white-space: nowrap;
}

.popup {
    left: 146px;
    top: 37px;
    bottom: 14px;
    width: 107px;
    display: flex;
    flex-direction: column;
    border: 1px solid #ccc;
    border-top: 0;
}

.popup-list {
    flex: 1;
    display: flex;
    flex-direction: column;
}

.popup-list button {
    flex: 25 1 0;
    display: flex;
    align-items: center;
    min-height: 0;
    padding: 0 7px 0 2px;
    white-space: nowrap;
}

.popup-list svg {
    width: 10px;
    height: 10px;
    margin-right: 3px;
}

.popup-list kbd {
    margin-left: auto;
    font-family: inherit;
}

.popup-list hr {
    flex: 8 1 0;
    margin: 0 6px;
    border: 0;
    background: linear-gradient(#c6c6c6, #c6c6c6) center / 100% 1px no-repeat;
}

.popup-list .sub {
    padding-right: 2px;
}

.popup-list .sub::after {
    content: "▸";
    margin-left: auto;
    font: 6px/6px "DejaVu Sans", sans-serif;
}

.popup-list .on {
    margin: 0 1px;
    padding: 0 6px 0 0;
    border: 1px solid #222;
    background: #e0e0e0;
}

.taskbar {
    position: relative;
    z-index: 1;
    display: flex;
    align-items: center;
    height: 17px;
    background: #d4d0c8;
    border-top: 1px solid #e8e6e0;
}

.start {
    display: flex;
    align-items: center;
    width: 21px;
    height: 15px;
    border: 1px solid #f4f2ee;
    border-right-color: #666;
    border-bottom-color: #666;
    font-weight: bold;
}

.start svg {
    width: 8px;
    height: 8px;
}

.task {
    width: 20px;
    height: 15px;
    margin-right: 1px;
    border: 1px solid transparent;
}

.start + .task {
    margin-left: 3px;
}

.task svg {
    display: block;
    width: 14px;
    height: 13px;
    margin: 0 auto;
}

.task.open {
    border-color: #f4f2ee #777 #777 #f4f2ee;
}

.task.active {
    background: #f6f4f0;
    border-color: #666 #fff #fff #666;
}

.kb {
    width: 8px;
    height: 8px;
    margin: 0 3px 0 auto;
}

.tray {
    display: flex;
    align-items: center;
    width: 92px;
    height: 16px;
    padding: 0 1px 0 2px;
    border: 1px solid #aaa;
    border-bottom: 0;
}

.tray svg {
    width: 8px;
    height: 8px;
    margin-right: 2px;
}

.tray > span {
    margin-right: auto;
}

.tray > svg:last-child {
    width: 7px;
    margin: 0 0 0 2px;
}

.time {
    display: flex;
    flex-direction: column;
    align-items: center;
    font: 5px/7px "Liberation Mono", "Noto Sans CJK SC", monospace;
    white-space: nowrap;
}
```
FILE: script.js
```
// "name:tone" is an icon, "." a drop arrow, "_" a gap, "," the overflow mark
const marks = { ".": "drop", "_": "gap", ",": "over" };

function buildTools(bar) {
    bar.dataset.tools.split(" ").forEach(item => {
        if (marks[item]) {
            let mark = document.createElement("i");
            mark.className = marks[item];
            bar.append(mark);
            return;
        }
        let [name, tone] = item.split(":");
        let button = document.createElement("button");
        button.className = "tool " + (tone || "");
        button.setAttribute("aria-label", name);
        button.innerHTML = `<svg><use href="#${name}"/></svg>`;
        bar.append(button);
    });
}

document.querySelectorAll("[data-tools]").forEach(buildTools);

// fill the rest of the navigator with empty rows
let rows = document.getElementById("nav-rows");
while (rows.children.length < 35) {
    rows.insertRow().innerHTML = "<td></td><td></td>";
}
```
